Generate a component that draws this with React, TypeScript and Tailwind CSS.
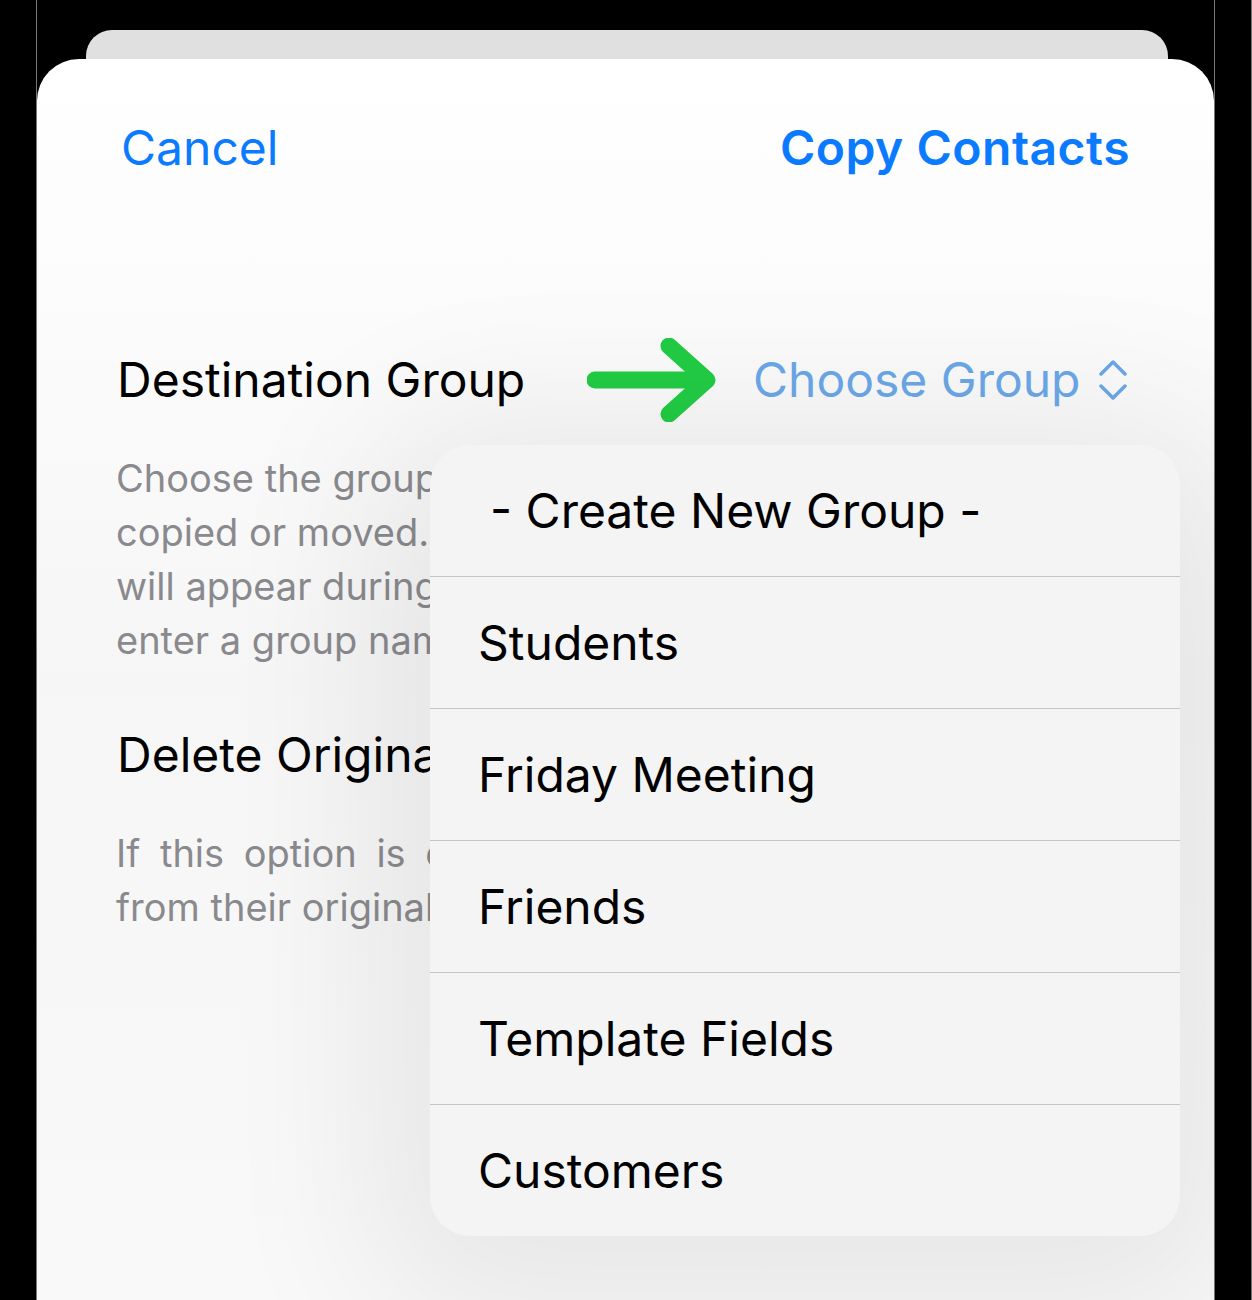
import React from "react";

const groups = ["Students", "Friday Meeting", "Friends", "Template Fields", "Customers"];

function GreenArrow() {
  return (
    <svg width="130" height="84" viewBox="0 0 130 84" fill="none">
      <path
        d="M8 42 H118 M82 8 L120 42 L82 76"
        stroke="#22cc44"
        strokeWidth="17"
        strokeLinecap="round"
        strokeLinejoin="round"
      />
    </svg>
  );
}

function UpDownChevron() {
  return (
    <svg width="30" height="40" viewBox="0 0 30 40" fill="none">
      <path
        d="M3 14 L15 2 L27 14 M3 26 L15 38 L27 26"
        stroke="#6ba7e8"
        strokeWidth="3.5"
        strokeLinecap="round"
        strokeLinejoin="round"
      />
    </svg>
  );
}

function GroupMenu() {
  return (
    <div className="absolute left-[393px] top-[386px] w-[750px] rounded-[40px] bg-[#f4f4f4] shadow-[0_30px_160px_60px_rgba(0,0,0,0.07)] overflow-hidden">
      <div className="h-[131px] flex items-center pl-[60px] text-[48px] text-black">
        - Create New Group -
      </div>
      {groups.map((g) => (
        <div
          key={g}
          className="h-[132px] flex items-center pl-[48px] border-t border-[#c4c4c4] text-[48px] text-black"
        >
          {g}
        </div>
      ))}
    </div>
  );
}

export default function App() {
  return (
    <div
      className="w-[1252px] h-[1300px] bg-black overflow-hidden relative"
      style={{ fontFamily: "Inter, 'Noto Sans', sans-serif" }}
    >
      {/* hairlines along the screen edges */}
      <div className="absolute left-[36px] top-0 bottom-0 w-px bg-[#777]" />
      <div className="absolute left-[1214px] top-0 bottom-0 w-px bg-[#777]" />
      <div className="absolute left-[1251px] top-0 bottom-0 w-px bg-[#777]" />

      <div className="pt-[30px]">
        <div className="ml-[86px] w-[1082px] h-[29px] rounded-t-[26px] bg-[#e0e0e0]" />

        <div className="relative ml-[37px] w-[1177px] h-[1241px] rounded-t-[42px] bg-gradient-to-b from-white via-[#f6f6f6] to-[#f9f9f9]">
          {/* nav bar */}
          <div className="flex items-center justify-between pl-[84px] pr-[84px] h-[178px] text-[#0a7aff]">
            <span className="text-[48px] leading-none">Cancel</span>
            <span className="text-[48px] leading-none font-semibold tracking-[0.5px]">Copy Contacts</span>
          </div>

          {/* destination group */}
          <div className="flex items-center pl-[80px] mt-[98px] h-[90px]">
            <span className="text-[48px] text-black w-[470px]">Destination Group</span>
            <GreenArrow />
            <span className="ml-[36px] text-[48px] text-[#6ba7e8]">Choose Group</span>
            <span className="ml-[18px]">
              <UpDownChevron />
            </span>
          </div>

          <div className="pl-[79px] pr-[84px] mt-[26px] text-[38px] leading-[54px] text-[#8a8a8e] whitespace-nowrap">
            <div>Choose the group to which contacts will be</div>
            <div>copied or moved. A prompt to create a group</div>
            <div>will appear during the copy if you do not</div>
            <div>enter a group name.</div>
          </div>

          <div className="pl-[80px] mt-[58px] text-[48px] leading-[60px] text-black">Delete Original</div>

          <div className="pl-[79px] pr-[84px] mt-[41px] text-[38px] leading-[54px] text-[#8a8a8e] whitespace-nowrap">
            <div className="[word-spacing:9px]">If this option is enabled, contacts will be removed</div>
            <div>from their original group after copying.</div>
          </div>

          <GroupMenu />
        </div>
      </div>
    </div>
  );
}
